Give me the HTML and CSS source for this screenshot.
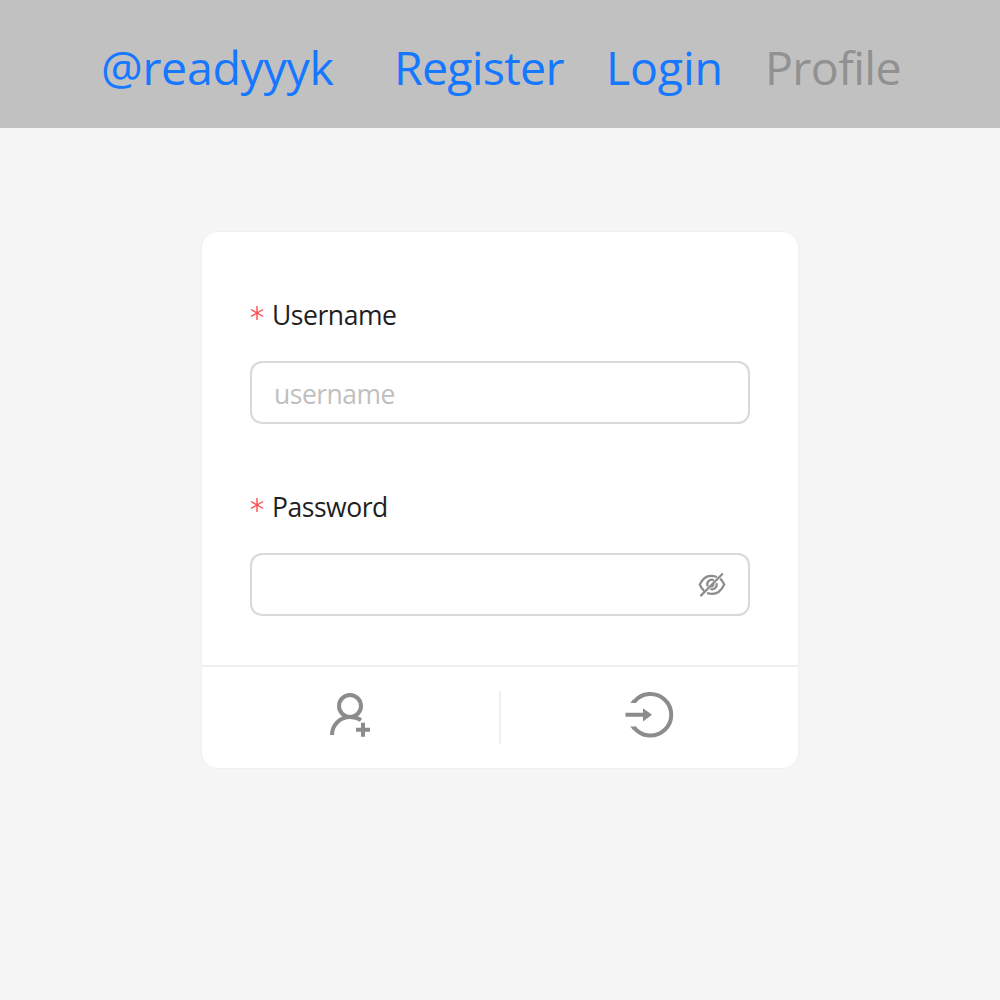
FILE: index.html
```html
<!DOCTYPE html>
<html lang="en">
<head>
<meta charset="utf-8">
<title>Login</title>
<link rel="stylesheet" href="styles.css">
</head>
<body>
<header class="nav">
  <a class="link brand">@readyyyk</a>
  <a class="link register">Register</a>
  <a class="link login">Login</a>
  <a class="link disabled">Profile</a>
</header>
<main class="main">
  <form class="card">
    <div class="fields">
      <div class="field">
        <label class="label"><svg class="star" viewBox="0 0 14 16"><path d="M7 1v14M1 4.5l12 7M13 4.5l-12 7"/></svg><span>Username</span></label>
        <div class="input"><span>username</span></div>
      </div>
      <div class="field">
        <label class="label"><svg class="star" viewBox="0 0 14 16"><path d="M7 1v14M1 4.5l12 7M13 4.5l-12 7"/></svg><span>Password</span></label>
        <div class="input password">
          <svg class="eye" viewBox="0 0 28 28"><path d="M19 6C10 2.700 5 6.500 1.800 13.500c1 2.500 2.500 4.700 4.200 6.200M9 22c8.500 2.700 14-1.500 17.200-8.500-1-2.400-2.300-4.400-4-5.900M15.800 9.200a4.600 4.600 0 0 0-6.100 6.100M12.400 18a4.600 4.600 0 0 0 6-5.800M12.600 15.200a2 2 0 0 0 2.700-2.500M2.400 25.100 24.900 2.500"/></svg>
        </div>
      </div>
    </div>
    <div class="actions">
      <div class="action"><svg class="icon" viewBox="0 0 48 48"><circle cx="23" cy="15" r="11"/><path d="M5 44C5 34 13 26 23 26c4 0 8 1.100 11 3.200M29 38.700h14M36 31.700v14"/></svg></div>
      <div class="action"><svg class="icon" viewBox="1 0 48 48"><path d="M9 11A20.800 20.800 0 1 1 9 36.500M.5 23.800h19"/><path class="solid" d="M18 17.300 27 23.800l-9 6.700zM5.300 12 8 8.500l4 1-1.500 2.500zM5.300 35.500h5.200l1.500 2.500-4 1z"/></svg></div>
    </div>
  </form>
</main>
</body>
</html>
```
FILE: styles.css
```css
* { box-sizing: border-box; }
body {
  margin: 0;
  min-height: 1000px;
  background: #f5f5f5;
  font-family: "Open Sans", "Noto Sans", sans-serif;
  font-weight: 400;
}
.nav {
  height: 128px;
  padding: 5px 0 0 101px;
  display: flex;
  align-items: center;
  background: #c1c1c1;
}
.link { flex: none; color: #1677ff; font-size: 46.5px; line-height: 72px; white-space: nowrap; }
.brand { width: 293px; letter-spacing: -0.3px; }
.register { width: 212px; letter-spacing: -0.75px; }
.login { width: 159px; letter-spacing: -0.2px; }
.disabled { color: #919191; letter-spacing: -0.6px; }
.main { padding-top: 103px; }
.card {
  width: 598px;
  height: 538px;
  margin: 0 auto;
  border: 1px solid #f0f0f0;
  border-radius: 17px;
  background: #fff;
  display: flex;
  flex-direction: column;
  overflow: hidden;
}
.fields { height: 433px; padding: 61px 48px 0; }
.field { height: 192px; }
.label {
  height: 44px;
  display: flex;
  align-items: center;
  font-size: 26.5px;
  line-height: 44px;
  letter-spacing: -0.45px;
  color: #1f1f1f;
}
.star { width: 14px; height: 16px; margin: 0 8px 4px 0; fill: none; stroke: #ff4d4f; stroke-width: 1.4; }
.input {
  height: 63px;
  margin-top: 24px;
  padding: 2px 22px 0;
  display: flex;
  align-items: center;
  border: 2px solid #d9d9d9;
  border-radius: 12px;
  font-size: 26.5px;
  letter-spacing: -0.5px;
  color: #bfbfbf;
}
.password { justify-content: flex-end; padding-top: 0; }
.eye { width: 28px; height: 28px; fill: none; stroke: #8c8c8c; stroke-width: 2.2; }
.actions { flex: 1; display: flex; border-top: 2px solid #f0f0f0; padding: 24px 0 24px; }
.action { flex: 1; display: flex; justify-content: center; }
.action + .action { border-left: 2px solid #f0f0f0; }
.icon { width: 48px; height: 48px; overflow: visible; fill: none; stroke: #8c8c8c; stroke-width: 4; }
.icon .solid { fill: #8c8c8c; stroke: none; }
```
